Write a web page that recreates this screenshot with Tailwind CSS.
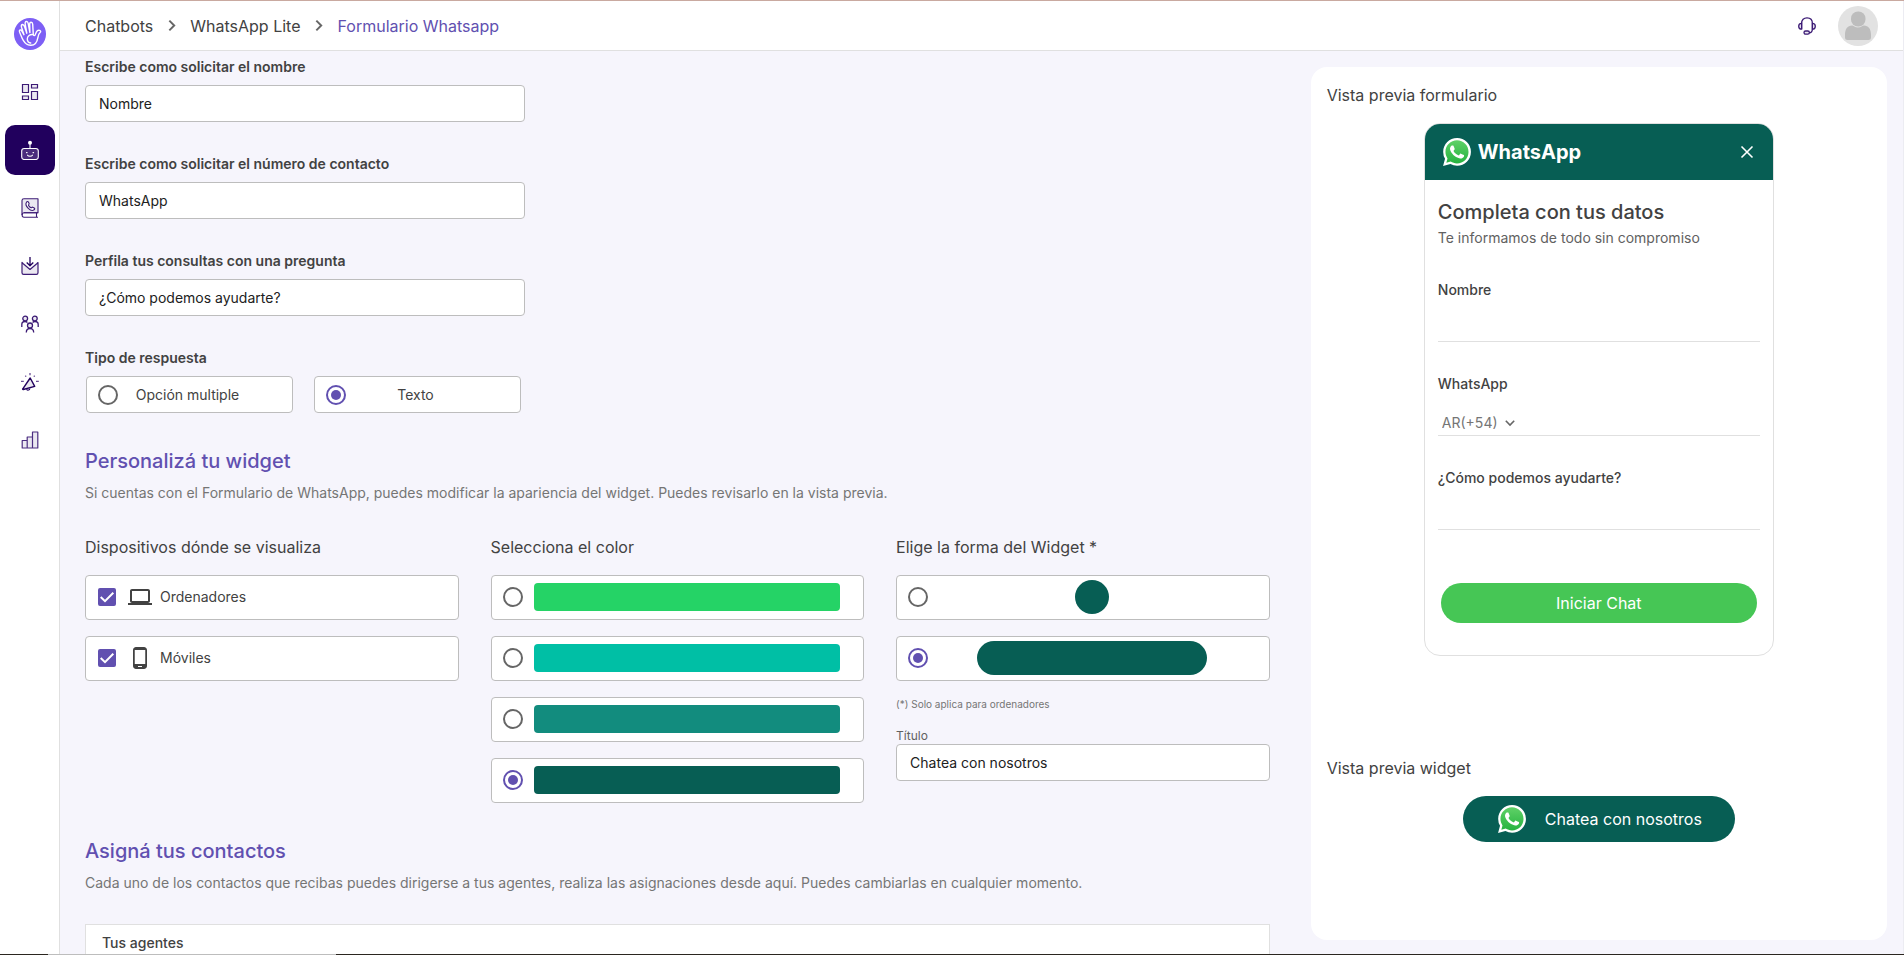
<!DOCTYPE html>
<html lang="es">
<head>
<meta charset="utf-8">
<meta name="viewport" content="width=device-width, initial-scale=1">
<title>Formulario Whatsapp</title>
<script src="https://cdn.jsdelivr.net/npm/@tailwindcss/browser@4"></script>
</head>
<body class="flex h-screen flex-col overflow-hidden border-t border-[#c9a9a0] bg-[#f6f5fc] font-[Inter,sans-serif] text-sm text-[#424242]">

<svg class="absolute size-0" aria-hidden="true">
  <defs>
    <linearGradient id="wa-green" x1="0" y1="0" x2="0" y2="1"><stop offset="0" stop-color="#5fd167"/><stop offset="1" stop-color="#27b340"/></linearGradient>
    <symbol id="wa" viewBox="0 0 24 24">
      <path fill="#fff" d="M.057 24l1.687-6.163a11.867 11.867 0 01-1.587-5.946C.16 5.335 5.495 0 12.05 0a11.82 11.82 0 018.413 3.488 11.82 11.82 0 013.48 8.414c-.003 6.557-5.338 11.892-11.893 11.892a11.9 11.9 0 01-5.688-1.448L.057 24z"/>
      <path fill="url(#wa-green)" d="M6.597 20.193c1.676.995 3.276 1.591 5.392 1.592 5.448 0 9.886-4.434 9.889-9.885.002-5.462-4.415-9.89-9.881-9.892-5.452 0-9.887 4.434-9.889 9.884-.001 2.225.651 3.891 1.746 5.634l-.999 3.648 3.742-.981z"/>
      <path fill="#fff" d="M17.472 14.382c-.297-.149-1.758-.867-2.03-.967-.273-.099-.471-.148-.67.15-.197.297-.767.966-.94 1.164-.173.199-.347.223-.644.075-.297-.15-1.255-.463-2.39-1.475-.883-.788-1.48-1.761-1.653-2.059-.173-.297-.018-.458.13-.606.134-.133.298-.347.446-.52.149-.174.198-.298.298-.497.099-.198.05-.371-.025-.52-.075-.149-.669-1.612-.916-2.207-.242-.579-.487-.5-.669-.51-.173-.008-.371-.01-.57-.01-.198 0-.52.074-.792.372-.272.297-1.04 1.016-1.04 2.479 0 1.462 1.065 2.875 1.213 3.074.149.198 2.096 3.2 5.077 4.487.709.306 1.262.489 1.694.625.712.227 1.36.195 1.871.118.571-.085 1.758-.719 2.006-1.413.248-.694.248-1.289.173-1.413-.074-.124-.272-.198-.57-.347"/>
    </symbol>
  </defs>
</svg>

<div class="flex min-h-0 flex-1">
  <aside class="flex w-[60px] shrink-0 flex-col items-center border-r border-[#e0e0e0] bg-white pl-px pt-[17px]">
    <a href="#" aria-label="Inicio" class="mb-[17px]">
      <svg class="block size-8" viewBox="0 0 32 32" fill="none" stroke="#fff" stroke-width="1.4" stroke-linecap="round" stroke-linejoin="round">
        <circle cx="16" cy="16" r="16" fill="#7d5ff5" stroke="none"/>
        <path d="M12.5 26c-2.400-1.500-4-4.500-5.500-8.500-.8-2-2-4-1.600-5 .6-1 1.900-.6 2.500.6l2 3.600M10 16.700 7.600 9.500c-.5-1.700-.2-2.700.7-3 1-.2 1.700.5 2.200 2l2.300 6.700M12.800 15.200 11.200 6c-.2-1.500.2-2.400 1.200-2.500 1-.1 1.500.6 1.800 2l1.700 9M15.900 14.500l-.2-8.300c0-1.400.5-2 1.400-2 1 0 1.500.7 1.600 2.100l.6 10.300c.2 1.200 1.300 1.300 1.900.2l1.300-3c.7-1.300 2-1.800 3.200-1.400 1.200.5 1.200 1.500.4 2.100-1.500 1.200-1.900 3-2.300 5.300-.7 4.300-3.200 7.400-6.800 7.500-2 .1-3.500-.4-4.500-1.300"/>
        <path d="M19.300 16.600c-3.300-.6-6 1.500-6 4.400 0 2 1.400 3.700 3.400 4"/>
      </svg>
    </a>
    <nav aria-label="Principal" class="flex flex-col gap-2">
      <a href="#" aria-label="Panel" class="grid size-[50px] place-items-center rounded-[10px]">
        <svg class="size-[18px]" viewBox="0 0 18 18" fill="#ebe8f1" stroke="#3c1b75" stroke-width="1.200"><path d="M1.500 1.500h6v8h-6zM10.500 1.500h6v3.500h-6zM1.500 13h6v3.500h-6zM10.500 8.500h6v8h-6z"/></svg>
      </a>
      <a href="#" aria-label="Chatbots" aria-current="page" class="grid size-[50px] place-items-center rounded-[10px] bg-[#21005d]">
        <svg class="size-5" viewBox="0 0 20 20" fill="none" stroke="#fff" stroke-width="1.100" stroke-linecap="round"><rect x="1.700" y="8.500" width="16.600" height="11" rx="2.500" fill="#4a2c7c"/><path d="M10 4v4.500M7.500 15.200c1 1.400 4 1.400 5 0"/><circle cx="10" cy="2.800" r="2" fill="#fff" stroke="none"/><path d="M6.500 12.600h.6M13 12.600h.6"/></svg>
      </a>
      <a href="#" aria-label="Contactos" class="grid size-[50px] place-items-center rounded-[10px]">
        <svg class="size-5" viewBox="0 0 20 20" fill="none" stroke="#3c1b75" stroke-width="1.100" stroke-linejoin="round"><path fill="#ebe8f1" d="M2 17V2.500C2 1.300 2.800.8 4 .8h14v14H4"/><path d="M18 14.800H4c-2.500 0-2.500 4.400 0 4.400h14M16.500 15v4"/><path d="M6.500 4.200c.8-1 1.600-.8 2 0l.6 1.300c.3.700-.8 1.200-.6 1.700.5 1.200 1.300 2 2.500 2.600.6.200 1-.9 1.700-.6l1.500.7c.7.400.7 1.200-.1 1.900-1.700 1.300-4 .3-5.800-1.500S5.300 5.900 6.500 4.200z" fill="#fff"/></svg>
      </a>
      <a href="#" aria-label="Bandeja de entrada" class="grid size-[50px] place-items-center rounded-[10px]">
        <svg class="size-[18px]" viewBox="0 0 18 18" fill="none" stroke="#3c1b75" stroke-width="1.200" stroke-linejoin="round"><path fill="#ebe8f1" d="M1 5.500v10.200c0 1 .6 1.600 1.600 1.600h12.800c1 0 1.600-.6 1.600-1.600V5.500l-1 1-7 6-7-6z"/><path stroke="#21005d" stroke-width="1.300" d="M9 0v8.500M5.700 5.500 9 8.800l3.300-3.300"/></svg>
      </a>
      <a href="#" aria-label="Equipo" class="grid size-[50px] place-items-center rounded-[10px]">
        <svg class="size-[18px]" viewBox="0 0 18 18" fill="#ebe8f1" stroke="#3c1b75" stroke-width="1.300"><path fill="none" d="M.8 12V9.500C.8 7.500 2.200 6.500 4 6.500c1 0 1.800.3 2.400 1M17.200 12V9.500c0-2-1.400-3-3.200-3-1 0-1.800.3-2.400 1M5.300 17.500c0-2.600 1.500-4 3.700-4s3.700 1.400 3.700 4"/><circle cx="4.200" cy="3.600" r="2.400"/><circle cx="13.800" cy="3.600" r="2.400"/><circle cx="9" cy="10.500" r="2.500"/></svg>
      </a>
      <a href="#" aria-label="Campañas" class="grid size-[50px] place-items-center rounded-[10px]">
        <svg class="size-[18px]" viewBox="0 0 18 18" fill="none" stroke="#21005d" stroke-width="1.400" stroke-linejoin="round"><path fill="#ebe8f1" d="M1.800 15.800 9.200 5l4.500 8.300-11.400 3.200c-.6.100-.9-.2-.5-.7z"/><path stroke-width="1.100" d="M5.500 16.200c1 1.600 3.300 1 3.300-.8"/><path stroke="#6a4f96" stroke-width="1.300" d="M9 0v2.300M0 8.300h2.800M15 8.300h2.800M4.400 2.600 5 3.800M13.600 2.600 13 3.800"/></svg>
      </a>
      <a href="#" aria-label="Estadísticas" class="grid size-[50px] place-items-center rounded-[10px]">
        <svg class="size-[18px]" viewBox="0 0 18 18" fill="#ebe8f1" stroke="#4b2d80" stroke-width="1.200" stroke-linejoin="round"><path d="M1.200 9.500h5v7.500h-5zM6.200 6h5.300v11H6.200zM11.500 1h5.300v16h-5.300z"/></svg>
      </a>
    </nav>
  </aside>

  <div class="flex min-w-0 flex-1 flex-col border-r border-[#ececf2]">
    <header class="flex h-[50px] shrink-0 items-center justify-between border-b border-[#e0e0e0] bg-white pl-[25px] pr-[25px]">
      <nav aria-label="Ruta" class="flex items-center gap-3 text-base">
        <a href="#">Chatbots</a>
        <svg class="size-[13px]" viewBox="0 0 12 12" fill="none" stroke="#666" stroke-width="1.800"><path d="M4 1.500 8.500 6 4 10.500"/></svg>
        <a href="#">WhatsApp Lite</a>
        <svg class="size-[13px]" viewBox="0 0 12 12" fill="none" stroke="#666" stroke-width="1.800"><path d="M4 1.500 8.500 6 4 10.500"/></svg>
        <a href="#" aria-current="page" class="text-[#6150b0]">Formulario Whatsapp</a>
      </nav>
      <div class="flex items-center gap-[22px]">
        <button type="button" aria-label="Soporte">
          <svg class="block size-[18px]" viewBox="0 0 18 18" fill="none" stroke="#3c1b75" stroke-width="1.300"><path d="M3.600 12V6.500C3.600 2.700 5.800.8 9 .8s5.400 1.900 5.400 5.700V12c0 2-1 3.700-3.200 3.900"/><path fill="#ebe8f1" d="M3.600 6.300C1.800 6.300.7 7.300.7 9.200s1.100 3 2.900 3zM14.400 6.300c1.800 0 2.900 1 2.900 2.900s-1.100 3-2.900 3z"/><rect x="6" y="14" width="5.400" height="3.200" rx="1.600" fill="#ebe8f1"/></svg>
        </button>
        <button type="button" aria-label="Perfil">
          <svg class="block size-10" viewBox="0 0 40 40"><circle cx="20" cy="20" r="20" fill="#e2e2e2"/><rect x="13" y="5.500" width="14.500" height="15" rx="7" fill="#bdbdbd"/><path fill="#bdbdbd" d="M7 29c0-6 2.500-9.500 7-9.500 1.500 0 3 2 6 2s4.500-2 6-2c4.500 0 7 3.500 7 9.500v2.500c0 1.700-1 2.500-2.500 2.500h-21C8 34 7 33.200 7 31.500z"/></svg>
        </button>
      </div>
    </header>

    <main class="grid min-h-0 flex-1 grid-cols-[37fr_18fr] gap-[41px] pl-[25px] pr-4">
      <form class="min-h-0 overflow-hidden pt-[6px]">
        <div class="flex flex-col gap-8">
          <div class="flex w-[440px] flex-col gap-2">
            <label for="f-name" class="leading-5 font-semibold">Escribe como solicitar el nombre</label>
            <input id="f-name" type="text" value="Nombre" class="h-[37px] rounded-[4px] border border-[#bdbdbd] bg-white px-[13px] text-[#212121]">
          </div>
          <div class="flex w-[440px] flex-col gap-2">
            <label for="f-phone" class="leading-5 font-semibold">Escribe como solicitar el número de contacto</label>
            <input id="f-phone" type="text" value="WhatsApp" class="h-[37px] rounded-[4px] border border-[#bdbdbd] bg-white px-[13px] text-[#212121]">
          </div>
          <div class="flex w-[440px] flex-col gap-2">
            <label for="f-question" class="leading-5 font-semibold">Perfila tus consultas con una pregunta</label>
            <input id="f-question" type="text" value="¿Cómo podemos ayudarte?" class="h-[37px] rounded-[4px] border border-[#bdbdbd] bg-white px-[13px] text-[#212121]">
          </div>
          <div role="radiogroup" aria-labelledby="answer-type" class="flex flex-col gap-2">
            <p id="answer-type" class="leading-5 font-semibold">Tipo de respuesta</p>
            <div class="flex gap-[21px] pl-px">
              <label class="flex h-[37px] w-[207px] items-center rounded-[4px] border border-[#bdbdbd] bg-white pl-[11px] pr-[35px]">
                <input type="radio" name="answer" class="grid size-5 shrink-0 appearance-none place-content-center rounded-full border-2 border-[#666] before:size-[10px] before:rounded-full checked:border-[#6150b0] checked:before:bg-[#6150b0]">
                <span class="flex-1 text-center">Opción multiple</span>
              </label>
              <label class="flex h-[37px] w-[207px] items-center rounded-[4px] border border-[#bdbdbd] bg-white pl-[11px] pr-[35px]">
                <input type="radio" name="answer" checked class="grid size-5 shrink-0 appearance-none place-content-center rounded-full border-2 border-[#666] before:size-[10px] before:rounded-full checked:border-[#6150b0] checked:before:bg-[#6150b0]">
                <span class="flex-1 text-center">Texto</span>
              </label>
            </div>
          </div>
        </div>

        <h2 class="mt-[34px] text-xl leading-7 font-medium text-[#6150b0]">Personalizá tu widget</h2>
        <p class="mt-2 leading-5 text-[#757575]">Si cuentas con el Formulario de WhatsApp, puedes modificar la apariencia del widget. Puedes revisarlo en la vista previa.</p>

        <div class="mt-8 grid grid-cols-3 gap-8">
          <section class="flex flex-col gap-4">
            <h3 class="text-base leading-6">Dispositivos dónde se visualiza</h3>
            <label class="flex h-[45px] items-center rounded-[4px] border border-[#bdbdbd] bg-white pb-px pl-3">
              <span class="relative size-[18px]">
                <input type="checkbox" checked class="block size-[18px] appearance-none rounded-[2px] border-2 border-[#666] checked:border-[#6150b0] checked:bg-[#6150b0]">
                <svg class="pointer-events-none absolute inset-0 size-[18px]" viewBox="0 0 18 18" fill="none" stroke="#fff" stroke-width="2"><path d="M2.700 9 7 13.200 15.300 4.800"/></svg>
              </span>
              <svg class="ml-3 size-6" viewBox="0 0 24 24" fill="#424242"><path d="M20 18c1.100 0 1.990-.9 1.990-2L22 6c0-1.100-.9-2-2-2H4c-1.100 0-2 .9-2 2v10c0 1.100.9 2 2 2H0v2h24v-2h-4zM4 6h16v10H4V6z"/></svg>
              <span class="ml-2">Ordenadores</span>
            </label>
            <label class="flex h-[45px] items-center rounded-[4px] border border-[#bdbdbd] bg-white pb-px pl-3">
              <span class="relative size-[18px]">
                <input type="checkbox" checked class="block size-[18px] appearance-none rounded-[2px] border-2 border-[#666] checked:border-[#6150b0] checked:bg-[#6150b0]">
                <svg class="pointer-events-none absolute inset-0 size-[18px]" viewBox="0 0 18 18" fill="none" stroke="#fff" stroke-width="2"><path d="M2.700 9 7 13.200 15.300 4.800"/></svg>
              </span>
              <svg class="ml-3 size-6" viewBox="0 0 24 24" fill="#424242"><path d="M16 1H8C6.340 1 5 2.340 5 4v16c0 1.660 1.340 3 3 3h8c1.660 0 3-1.340 3-3V4c0-1.660-1.340-3-3-3zm-2 20h-4v-1h4v1zm3.250-3H6.750V4h10.500v14z"/></svg>
              <span class="ml-2">Móviles</span>
            </label>
          </section>

          <section class="flex flex-col gap-4">
            <h3 class="text-base leading-6">Selecciona el color</h3>
            <label class="flex h-[45px] items-center gap-[11px] rounded-[4px] border border-[#bdbdbd] bg-white pb-px pl-[11px] pr-[23px]">
              <input type="radio" name="color" aria-label="Verde claro" class="grid size-5 shrink-0 appearance-none place-content-center rounded-full border-2 border-[#666] before:size-[10px] before:rounded-full checked:border-[#6150b0] checked:before:bg-[#6150b0]">
              <span class="h-7 flex-1 rounded-[4px] bg-[#25d366]"></span>
            </label>
            <label class="flex h-[45px] items-center gap-[11px] rounded-[4px] border border-[#bdbdbd] bg-white pb-px pl-[11px] pr-[23px]">
              <input type="radio" name="color" aria-label="Turquesa" class="grid size-5 shrink-0 appearance-none place-content-center rounded-full border-2 border-[#666] before:size-[10px] before:rounded-full checked:border-[#6150b0] checked:before:bg-[#6150b0]">
              <span class="h-7 flex-1 rounded-[4px] bg-[#00bfa5]"></span>
            </label>
            <label class="flex h-[45px] items-center gap-[11px] rounded-[4px] border border-[#bdbdbd] bg-white pb-px pl-[11px] pr-[23px]">
              <input type="radio" name="color" aria-label="Verde azulado" class="grid size-5 shrink-0 appearance-none place-content-center rounded-full border-2 border-[#666] before:size-[10px] before:rounded-full checked:border-[#6150b0] checked:before:bg-[#6150b0]">
              <span class="h-7 flex-1 rounded-[4px] bg-[#128c7e]"></span>
            </label>
            <label class="flex h-[45px] items-center gap-[11px] rounded-[4px] border border-[#bdbdbd] bg-white pb-px pl-[11px] pr-[23px]">
              <input type="radio" name="color" aria-label="Verde oscuro" checked class="grid size-5 shrink-0 appearance-none place-content-center rounded-full border-2 border-[#666] before:size-[10px] before:rounded-full checked:border-[#6150b0] checked:before:bg-[#6150b0]">
              <span class="h-7 flex-1 rounded-[4px] bg-[#075e54]"></span>
            </label>
          </section>

          <section class="flex flex-col gap-4">
            <h3 class="text-base leading-6">Elige la forma del Widget *</h3>
            <label class="flex h-[45px] items-center rounded-[4px] border border-[#bdbdbd] bg-white pb-px pl-[11px] pr-[13px]">
              <input type="radio" name="shape" aria-label="Círculo" class="grid size-5 shrink-0 appearance-none place-content-center rounded-full border-2 border-[#666] before:size-[10px] before:rounded-full checked:border-[#6150b0] checked:before:bg-[#6150b0]">
              <span class="flex flex-1 justify-center"><span class="size-[34px] rounded-full bg-[#075e54]"></span></span>
            </label>
            <label class="flex h-[45px] items-center rounded-[4px] border border-[#bdbdbd] bg-white pb-px pl-[11px] pr-[13px]">
              <input type="radio" name="shape" aria-label="Píldora" checked class="grid size-5 shrink-0 appearance-none place-content-center rounded-full border-2 border-[#666] before:size-[10px] before:rounded-full checked:border-[#6150b0] checked:before:bg-[#6150b0]">
              <span class="flex flex-1 justify-center"><span class="h-[34px] w-[70%] rounded-full bg-[#075e54]"></span></span>
            </label>
            <p class="text-[10px] leading-[15px] text-[#757575]">(*) Solo aplica para ordenadores</p>
            <div class="flex flex-col">
              <label for="f-title" class="text-xs leading-4 text-[#616161]">Título</label>
              <input id="f-title" type="text" value="Chatea con nosotros" class="h-[37px] rounded-[4px] border border-[#bdbdbd] bg-white px-[13px] text-[#212121]">
            </div>
          </section>
        </div>

        <h2 class="mt-[34px] text-xl leading-7 font-medium text-[#6150b0]">Asigná tus contactos</h2>
        <p class="mt-2 leading-5 text-[#757575]">Cada uno de los contactos que recibas puedes dirigerse a tus agentes, realiza las asignaciones desde aquí. Puedes cambiarlas en cualquier momento.</p>
        <table class="mt-[31px] w-full border-separate border-spacing-0 border border-[#e0e0e0] bg-white text-left">
          <thead><tr><th scope="col" class="px-4 py-2 leading-5 font-medium">Tus agentes</th></tr></thead>
        </table>
      </form>

      <aside aria-label="Vista previa" class="mt-4 mb-[14px] flex flex-col rounded-2xl bg-white p-4">
        <h3 class="text-base leading-6">Vista previa formulario</h3>
        <section class="mx-auto mt-4 w-full max-w-[350px] overflow-hidden rounded-2xl border border-[#e0e0e0] pb-8">
          <header class="flex h-14 items-center bg-[#075e54] px-[18px] text-white">
            <svg class="size-7"><use href="#wa"/></svg>
            <span class="ml-[7px] flex-1 text-xl font-bold">WhatsApp</span>
            <button type="button" aria-label="Cerrar"><svg class="block size-4" viewBox="0 0 16 16" stroke="#fff" stroke-width="1.600"><path d="M2.500 2.500l11 11M13.500 2.500l-11 11"/></svg></button>
          </header>
          <div class="px-[13px] pt-[18px]">
            <h4 class="text-xl leading-7 font-medium">Completa con tus datos</h4>
            <p class="mt-[2px] leading-5 text-[#616161]">Te informamos de todo sin compromiso</p>
            <div class="mt-8 flex flex-col">
              <label for="p-name" class="leading-5 font-medium">Nombre</label>
              <input id="p-name" type="text" class="h-[42px] border-b border-[#e0e0e0]">
            </div>
            <div class="mt-8 flex flex-col">
              <label for="p-phone" class="leading-5 font-medium">WhatsApp</label>
              <div class="flex h-[42px] items-end border-b border-[#e0e0e0]">
                <div class="relative">
                  <select aria-label="Prefijo" class="h-6 appearance-none bg-transparent pl-1 pr-6 text-sm text-[#757575]"><option>AR(+54)</option></select>
                  <svg class="pointer-events-none absolute top-[6px] right-[6px] size-3" viewBox="0 0 12 12" fill="none" stroke="#666" stroke-width="1.600"><path d="M1.800 3.800 6 8l4.200-4.200"/></svg>
                </div>
                <input id="p-phone" type="tel" class="h-6 min-w-0 flex-1">
              </div>
            </div>
            <div class="mt-8 flex flex-col">
              <label for="p-question" class="leading-5 font-medium">¿Cómo podemos ayudarte?</label>
              <input id="p-question" type="text" class="h-[42px] border-b border-[#e0e0e0]">
            </div>
            <div class="mt-[53px] px-[3px]">
              <button type="button" class="h-10 w-full rounded-full bg-[#46c655] text-base text-white">Iniciar Chat</button>
            </div>
          </div>
        </section>
        <h3 class="mt-[100px] text-base leading-6">Vista previa widget</h3>
        <button type="button" class="mx-auto mt-4 flex h-[46px] items-center gap-[19px] rounded-full bg-[#075e54] pl-[35px] pr-[33px] text-base text-white">
          <svg class="size-7"><use href="#wa"/></svg>
          Chatea con nosotros
        </button>
      </aside>
    </main>
  </div>
</div>
<footer class="flex h-px shrink-0 bg-[#2b2620]"><div class="ml-12 w-72 bg-[#bdbdbd]"></div></footer>
</body>
</html>
